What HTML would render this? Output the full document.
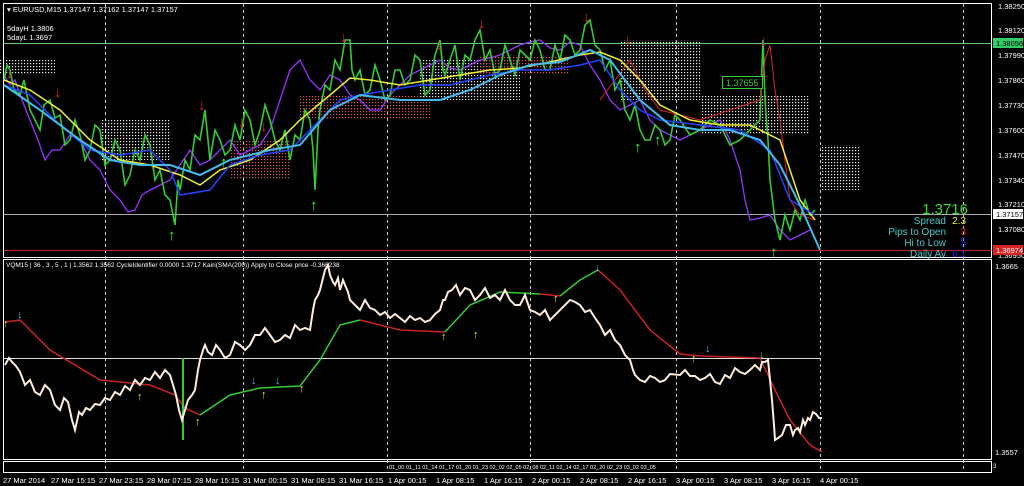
<!DOCTYPE html>
<html><head><meta charset="utf-8"><style>
html,body{margin:0;padding:0;background:#000;width:1024px;height:486px;overflow:hidden}
svg{display:block}
text{font-family:"Liberation Sans",sans-serif}
</style></head><body>
<svg width="1024" height="486" viewBox="0 0 1024 486" xmlns="http://www.w3.org/2000/svg">
<rect width="1024" height="486" fill="#000"/>
<defs><pattern id="dots" width="3" height="3" patternUnits="userSpaceOnUse"><rect width="1.2" height="1.2" fill="#eee"/></pattern>
<pattern id="rdots" width="3" height="3" patternUnits="userSpaceOnUse"><rect width="1.2" height="1.2" fill="#d55"/></pattern></defs>
<g fill="none" stroke="#fff" stroke-width="1">
<rect x="3.5" y="3.5" width="988" height="254"/>
<rect x="3.5" y="259.5" width="988" height="200"/>
<rect x="3.5" y="461.5" width="988" height="11"/>
</g>
<g stroke="#ccc" stroke-dasharray="3,3" stroke-width="1">
<line x1="105.5" y1="4" x2="105.5" y2="472"/><line x1="243.5" y1="4" x2="243.5" y2="472"/>
<line x1="387.5" y1="4" x2="387.5" y2="472"/><line x1="530.5" y1="4" x2="530.5" y2="472"/>
<line x1="676.5" y1="4" x2="676.5" y2="472"/><line x1="820.5" y1="4" x2="820.5" y2="472"/>
<line x1="963.5" y1="4" x2="963.5" y2="472"/>
</g>
<line x1="4" y1="43.5" x2="991" y2="43.5" stroke="#6c6"/>
<line x1="4" y1="214.5" x2="991" y2="214.5" stroke="#aaa"/>
<line x1="4" y1="250.5" x2="991" y2="250.5" stroke="#c22"/>
<line x1="4" y1="358.5" x2="820" y2="358.5" stroke="#ddd"/>
<g>
<rect x="0" y="60" width="55" height="15" fill="url(#dots)"/>
<rect x="100" y="120" width="70" height="40" fill="url(#dots)"/>
<rect x="230" y="140" width="60" height="40" fill="url(#rdots)"/>
<rect x="300" y="95" width="130" height="25" fill="url(#rdots)"/>
<rect x="420" y="60" width="100" height="40" fill="url(#dots)"/>
<rect x="480" y="55" width="90" height="20" fill="url(#rdots)"/>
<rect x="620" y="40" width="80" height="60" fill="url(#dots)"/>
<rect x="700" y="95" width="110" height="40" fill="url(#dots)"/>
<rect x="820" y="145" width="40" height="45" fill="url(#dots)"/>
</g>
<polyline fill="none" stroke="#93f" stroke-width="1.3" points="4,75 10,85 15,80 22,100 30,120 38,140 45,160 52,150 60,150 70,135 80,140 90,160 100,170 110,190 120,200 128,212 135,210 142,195 150,190 160,185 170,180 180,165 190,150 200,165 210,160 220,150 230,140 240,155 250,150 260,145 270,130 280,100 290,70 300,60 310,80 320,90 330,75 340,80 350,95 360,100 370,110 380,110 390,95 400,85 410,75 420,70 430,65 440,60 450,68 460,70 470,65 480,60 490,58 500,55 510,50 520,45 530,42 540,40 550,48 560,50 570,42 580,45 590,65 600,80 610,100 620,110 630,105 640,100 650,120 660,130 670,135 680,140 690,135 700,130 710,125 720,120 730,140 740,170 745,200 750,220 760,218 770,215 780,230 790,240 800,235 810,230"/>
<polyline fill="none" stroke="#3c3" stroke-width="1.6" points="4,80 7,65 10,70 14,90 20,95 24,80 30,110 35,120 40,130 44,105 50,100 55,118 60,115 65,145 70,140 75,120 80,135 85,160 90,150 95,125 100,130 105,165 110,160 115,140 120,150 125,185 130,175 135,150 140,160 145,135 150,145 155,180 160,170 165,195 170,200 175,225 178,180 180,190 185,160 190,170 195,135 200,140 205,110 210,160 215,130 220,140 225,155 230,150 235,125 240,140 245,110 250,120 255,145 260,130 265,105 270,120 275,140 280,150 285,130 290,160 295,135 300,140 305,110 310,120 313,150 315,190 318,130 320,110 325,85 330,90 335,60 340,70 345,40 350,40 352,70 355,80 360,70 365,95 370,90 375,65 380,80 385,100 390,95 395,70 400,70 405,85 410,80 415,55 420,60 425,95 430,90 435,55 440,40 443,70 445,75 450,60 455,45 460,80 465,55 470,60 475,40 480,30 485,60 490,50 495,75 500,70 505,45 510,60 515,75 520,50 525,55 530,60 535,40 540,50 545,70 550,70 555,45 560,60 565,35 570,40 575,55 580,50 585,25 590,20 595,45 600,50 605,70 610,60 615,90 620,80 625,110 630,120 635,105 640,130 645,140 650,140 655,125 660,130 665,145 670,140 675,115 680,120 690,135 700,130 710,120 720,125 730,145 740,140 750,130 760,120 763,40 765,100 768,140 770,180 775,220 780,240 785,215 790,230 795,210 800,220 805,200 810,215 815,210"/>
<polyline fill="none" stroke="#d22" stroke-width="1" points="600,100 615,80 630,60 645,90 660,110 680,115 700,120 730,110 760,100 765,60 770,45 775,90 780,120 785,160 790,200 800,215 815,220"/>
<polyline fill="none" stroke="#ee3" stroke-width="1.5" points="4,80 30,90 60,110 90,140 120,160 150,165 180,175 200,185 220,170 250,160 280,140 300,120 330,95 350,78 370,80 400,85 430,80 460,75 490,70 520,68 550,62 580,55 600,52 620,60 640,80 660,105 690,120 720,125 750,125 780,140 800,200 815,220"/>
<polyline fill="none" stroke="#24f" stroke-width="1.5" points="4,85 30,95 60,125 90,150 120,155 150,150 170,170 180,195 210,190 230,165 260,155 290,150 300,140 320,120 340,100 360,95 390,90 420,85 450,85 470,80 490,75 520,70 550,70 580,65 600,60 620,90 640,110 660,120 700,125 740,130 770,150 790,200 815,215"/>
<polyline fill="none" stroke="#4be" stroke-width="2" points="4,85 40,110 80,140 110,160 140,165 170,165 200,175 230,160 270,150 300,145 330,110 360,95 400,100 440,100 470,90 500,75 530,65 560,62 590,50 610,60 640,100 670,125 700,130 730,130 760,140 780,165 800,205 820,250"/>
<g fill="#e22" font-size="15" font-weight="bold"><text x="6" y="78">↓</text><text x="54" y="97">↓</text><text x="198" y="110">↓</text><text x="238" y="127">↓</text><text x="260" y="131">↓</text><text x="340" y="42">↓</text><text x="436" y="50">↓</text><text x="478" y="28">↓</text><text x="583" y="22">↓</text><text x="624" y="44">↓</text><text x="760" y="46">↓</text></g>
<g fill="#3f3" font-size="15" font-weight="bold"><text x="168" y="240">↑</text><text x="220" y="167">↑</text><text x="310" y="210">↑</text><text x="634" y="152">↑</text><text x="654" y="145">↑</text><text x="770" y="257">↑</text></g>
<rect x="722.5" y="76.5" width="40" height="12" fill="#000" stroke="#3c3"/>
<text x="726" y="86" fill="#3c3" font-size="9">1.37655</text>
<text x="7" y="12" fill="#fff" font-size="7.5">▾ EURUSD,M15  1.37147 1.37162 1.37147 1.37157</text>
<text x="7" y="31" fill="#fff" font-size="7.5">5dayH 1.3806</text>
<text x="7" y="40" fill="#fff" font-size="7.5">5dayL 1.3697</text>
<g font-size="10" text-anchor="end">
<text x="968" y="214" fill="#3d3" font-size="15">1.3716</text>
<text x="946" y="224" fill="#4cc">Spread</text><text x="966" y="224" fill="#ee3">2.3</text>
<text x="946" y="235" fill="#4cc">Pips to Open</text><text x="966" y="235" fill="#e22">3</text>
<text x="946" y="246" fill="#4cc">Hi to Low</text><text x="966" y="246" fill="#22f">5</text>
<text x="946" y="257" fill="#4cc">Daily Av</text><text x="966" y="257" fill="#22f">6.1</text>
</g>
<g fill="#fff" font-size="7.5">
<text x="998" y="9">1.38250</text><text x="998" y="33">1.38120</text><text x="998" y="58">1.37990</text>
<text x="998" y="83">1.37860</text><text x="998" y="108">1.37730</text><text x="998" y="133">1.37600</text>
<text x="998" y="158">1.37470</text><text x="998" y="183">1.37340</text><text x="998" y="207">1.37210</text>
<text x="998" y="232">1.37080</text><text x="998" y="258">1.36950</text>
<text x="995" y="269">1.3665</text><text x="995" y="455">1.3557</text>
</g>
<rect x="993" y="38" width="30" height="10" fill="#3c6"/><text x="996" y="46" fill="#000" font-size="7.5">1.38056</text>
<rect x="993" y="209" width="30" height="10" fill="#fff"/><text x="996" y="217" fill="#000" font-size="7.5">1.37157</text>
<rect x="993" y="245" width="30" height="10" fill="#d22"/><text x="996" y="253" fill="#fff" font-size="7.5">1.36974</text>
<text x="6" y="267" fill="#fff" font-size="6.5">VQM15 | 36 , 3 , 5 , 1 | 1.3562 1.3562  CycleIdentifier 0.0000 1.3717  Kairi(SMA(200)) Apply to Close price -0.366238</text>
<polyline fill="none" stroke="#c22" stroke-width="1.5" points="5,322 20,320 50,350 100,380 150,385 175,395 185,408 200,415"/>
<polyline fill="none" stroke="#3c3" stroke-width="1.5" points="200,415 230,395 260,388 300,386 320,360 340,325 360,320"/>
<polyline fill="none" stroke="#c22" stroke-width="1.5" points="360,320 400,330 445,332"/>
<polyline fill="none" stroke="#3c3" stroke-width="1.5" points="445,332 470,305 500,292 540,294"/>
<polyline fill="none" stroke="#c22" stroke-width="1.5" points="540,294 560,296"/>
<polyline fill="none" stroke="#3c3" stroke-width="1.5" points="560,296 580,280 598,270"/>
<polyline fill="none" stroke="#c22" stroke-width="1.5" points="598,270 620,290 650,330 680,354 700,356 760,358 775,390 790,420 810,445 822,452"/>
<line x1="183" y1="358" x2="183" y2="440" stroke="#3c3" stroke-width="2"/>
<polyline fill="none" stroke="#fed" stroke-width="2" points="5,365 9,358 12,362 16,366 20,372 25,385 30,380 35,392 40,395 45,385 50,390 55,405 60,410 64,398 68,402 72,420 75,430 79,412 82,415 86,408 90,410 95,404 100,405 105,398 110,400 115,392 120,395 125,386 130,390 135,380 140,385 145,378 150,380 155,372 160,378 165,370 170,375 173,385 176,395 179,410 182,420 185,410 188,400 192,395 195,390 198,370 200,360 203,350 205,345 208,352 212,355 216,345 220,350 225,358 230,355 235,342 240,345 245,350 250,345 255,335 260,335 265,328 270,335 275,342 280,340 285,335 290,338 295,325 300,330 305,328 310,330 313,310 315,300 318,295 320,290 323,278 325,270 328,265 330,275 333,282 335,285 338,278 340,290 343,280 345,285 348,292 350,300 355,305 360,310 365,300 370,308 375,310 380,315 385,312 390,318 395,314 400,318 405,322 410,316 415,320 420,318 425,322 430,320 435,314 440,310 443,300 445,300 448,292 452,290 456,285 460,295 465,288 470,290 475,300 480,295 485,288 490,298 495,295 500,300 505,290 510,300 515,305 520,305 525,295 530,310 535,312 540,315 545,310 550,320 555,315 560,310 565,305 570,300 575,302 580,305 585,312 590,310 595,318 600,325 605,335 610,330 615,340 620,345 625,355 630,360 633,370 635,375 640,380 645,382 650,376 655,378 660,382 665,380 670,374 680,375 685,370 690,376 695,376 700,380 705,378 710,374 715,382 720,384 725,375 730,378 735,368 740,372 745,374 750,370 755,365 760,370 762,362 765,362 768,360 770,380 772,400 774,425 775,440 778,438 782,435 786,425 790,425 793,435 795,430 798,428 800,432 803,420 805,425 808,418 810,420 813,412 816,414 819,418 822,418"/>
<g font-size="11" fill="#4cf" font-weight="bold"><text x="17" y="318">↓</text><text x="251" y="384">↓</text><text x="275" y="384">↓</text><text x="595" y="271">↓</text><text x="705" y="352">↓</text><text x="759" y="358">↓</text></g>
<g font-size="11" fill="#ee3" font-weight="bold"><text x="3" y="327">↑</text><text x="137" y="400">↑</text><text x="195" y="425">↑</text><text x="261" y="398">↑</text><text x="299" y="392">↑</text><text x="441" y="340">↑</text><text x="473" y="338">↑</text><text x="553" y="302">↑</text><text x="691" y="362">↑</text></g>
<text x="389" y="469" fill="#fff" font-size="5.5">01_00 01_11 01_14 01_17 01_20 01_23 02_02 02_05 02_08 02_11 02_14 02_17 02_20 02_23 03_02 03_05</text>
<text x="993" y="468" fill="#fff" font-size="6">3</text>
<g fill="#fff" font-size="7.5">
<text x="3" y="483">27 Mar 2014</text><text x="51" y="483">27 Mar 15:15</text><text x="99" y="483">27 Mar 23:15</text>
<text x="147" y="483">28 Mar 07:15</text><text x="195" y="483">28 Mar 15:15</text><text x="243" y="483">31 Mar 00:15</text>
<text x="291" y="483">31 Mar 08:15</text><text x="339" y="483">31 Mar 16:15</text><text x="388" y="483">1 Apr 00:15</text>
<text x="436" y="483">1 Apr 08:15</text><text x="484" y="483">1 Apr 16:15</text><text x="532" y="483">2 Apr 00:15</text>
<text x="580" y="483">2 Apr 08:15</text><text x="628" y="483">2 Apr 16:15</text><text x="676" y="483">3 Apr 00:15</text>
<text x="724" y="483">3 Apr 08:15</text><text x="772" y="483">3 Apr 16:15</text><text x="820" y="483">4 Apr 00:15</text>
</g>
</svg>
</body></html>
